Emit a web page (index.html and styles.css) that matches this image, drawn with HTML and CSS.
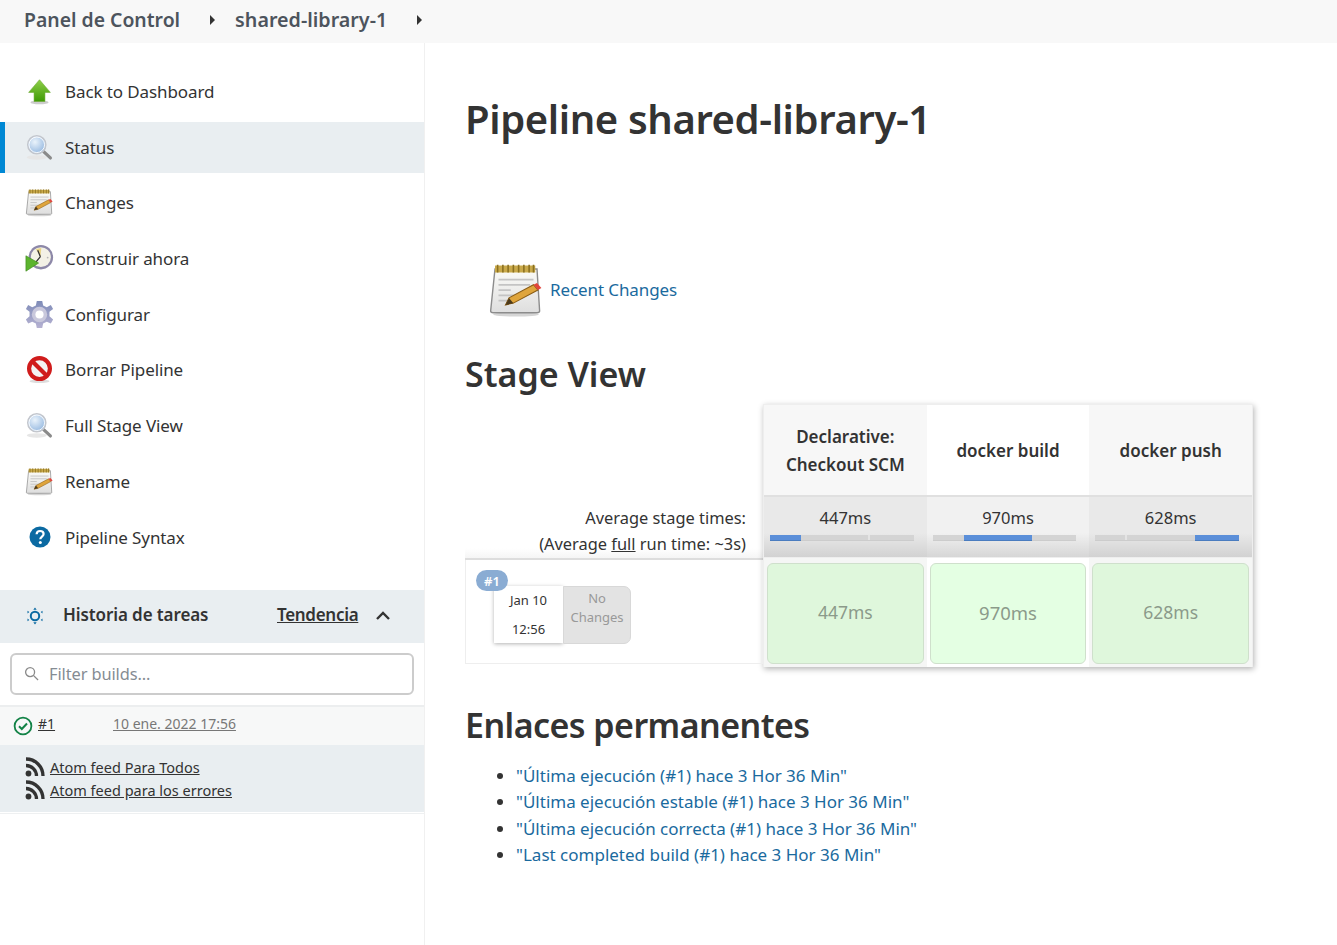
FILE: index.html
```html
<!DOCTYPE html>
<html lang="es">
<head>
<meta charset="utf-8">
<title>shared-library-1</title>
<link rel="stylesheet" href="styles.css">
</head>
<body>
<svg class="defs" width="0" height="0" aria-hidden="true">
  <defs>
    <linearGradient id="gArrow" x1="0" y1="0" x2="0" y2="1"><stop offset="0" stop-color="#8fcf4a"/><stop offset="1" stop-color="#3f9a06"/></linearGradient>
    <radialGradient id="gLens" cx=".4" cy=".35" r=".7"><stop offset="0" stop-color="#eaf3fb"/><stop offset="1" stop-color="#8fb4de"/></radialGradient>
    <linearGradient id="gGear" x1="0" y1="0" x2="0" y2="1"><stop offset="0" stop-color="#7f8cb8"/><stop offset="1" stop-color="#b6b2d2"/></linearGradient>
    <linearGradient id="gPaper" x1="0" y1="0" x2="0" y2="1"><stop offset="0" stop-color="#fbfbf8"/><stop offset="1" stop-color="#dedede"/></linearGradient>
    <symbol id="i-arrow" viewBox="0 0 32 32">
      <ellipse cx="16" cy="28" rx="10" ry="2" fill="#ccc"/>
      <path d="M16 3 L28 17 H22 V27 H10 V17 H4 Z" fill="url(#gArrow)" stroke="#6aa82c" stroke-width=".6"/>
    </symbol>
    <symbol id="i-mag" viewBox="0 0 32 32">
      <ellipse cx="13" cy="27" rx="11" ry="2.5" fill="#e6e6e6"/>
      <path d="M20 20 L28 27.500" stroke="#8a8a8a" stroke-width="3.600" stroke-linecap="round"/>
      <circle cx="13" cy="13" r="10" fill="url(#gLens)" stroke="#c3c6cc" stroke-width="1.600"/>
      <circle cx="13" cy="13" r="8.600" fill="none" stroke="#fff" stroke-width="1"/>
    </symbol>
    <symbol id="i-note" viewBox="0 0 32 32">
      <ellipse cx="16" cy="30" rx="13" ry="1.200" fill="#d5d5d5"/>
      <path d="M4 4 H28 L29.500 28 Q29.500 29 28 29 H3 Q1.500 29 1.500 28 Z" fill="url(#gPaper)" stroke="#8c8c8c" stroke-width=".8"/>
      <path d="M4 2 H27 V6 H4 Z" fill="#c9a94a"/>
      <path d="M5.500 1.500 V6 M8.500 1.500 V6 M11.500 1.500 V6 M14.500 1.500 V6 M17.500 1.500 V6 M20.500 1.500 V6 M23.500 1.500 V6 M26 1.500 V6" stroke="#8a7020" stroke-width=".9"/>
      <path d="M6 10 H26 M6 13 H24 M6 16 H13 M6 19 H17 M6 22 H11" stroke="#c4c4c4" stroke-width="1"/>
      <path d="M10 24.500 L12 20.500 L26 13 L28.500 16 L14.500 23.500 Z" fill="#dfa53c" stroke="#8a5c14" stroke-width=".6"/>
      <path d="M26 13 L28 12 L30.500 14.800 L28.500 16 Z" fill="#e2453c"/>
      <path d="M10 24.500 L12 20.500 L14.500 23.500 Z" fill="#4b3a1c"/>
    </symbol>
    <symbol id="i-build" viewBox="0 0 32 32">
      <circle cx="17.500" cy="14.500" r="13.500" fill="#8d88a8"/>
      <circle cx="17.500" cy="14.500" r="11" fill="#f3f1e6"/>
      <path d="M18 4.500 L12 5.500 L17 14 Z" fill="#e8d484"/>
      <path d="M17 14 L12 20 M17 14 L14 7" stroke="#333" stroke-width="1.400"/>
      <circle cx="25" cy="15" r="1" fill="#b5b5b5"/>
      <path d="M1 13 L15 21 L1 30 Z" fill="#5cb42e" stroke="#3e8a1c" stroke-width=".7"/>
    </symbol>
    <symbol id="i-gear" viewBox="0 0 32 32">
      <path d="M13 1 H19 L20 6 L24 8 L28.500 5.500 L31 10 L27 13 L27 18 L31 21.500 L28.500 26 L24 24 L20 26 L19 31 H13 L12 26 L8 24 L3.500 26 L1 21.500 L5 18 L5 13 L1 10 L3.500 5.500 L8 8 L12 6 Z" fill="url(#gGear)"/>
      <circle cx="16" cy="16" r="8.500" fill="#c9c8dc"/>
      <circle cx="16" cy="16" r="4.500" fill="#fff"/>
    </symbol>
    <symbol id="i-stop" viewBox="0 0 32 32">
      <ellipse cx="16" cy="29" rx="11" ry="2" fill="#ddd"/>
      <circle cx="16" cy="15" r="11.500" fill="#f4f4f4" stroke="#d01c1c" stroke-width="4.600"/>
      <path d="M8 7 L24 23" stroke="#d01c1c" stroke-width="4.600"/>
    </symbol>
    <symbol id="i-help" viewBox="0 0 24 24">
      <circle cx="12" cy="12" r="10.500" fill="#0b6aa2"/>
      <path d="M8.600 9.300 C8.700 7 10.200 6 12.100 6 C14.200 6 15.600 7.200 15.600 9 C15.600 11.600 12.300 11.700 12.300 14.300" fill="none" stroke="#fff" stroke-width="2.200"/>
      <circle cx="12.300" cy="17.500" r="1.500" fill="#fff"/>
    </symbol>
    <symbol id="i-sun" viewBox="0 0 18 18">
      <circle cx="9" cy="9" r="4.200" fill="none" stroke="#0b6aa2" stroke-width="2"/>
      <path d="M9 .5 L7.300 2.800 H10.700 Z M9 17.500 L7.300 15.200 H10.700 Z M1.500 3.800 L1.500 6.500 L3.300 5 Z M16.500 3.800 L16.500 6.500 L14.700 5 Z M1.500 14.200 L1.500 11.500 L3.300 13 Z M16.500 14.200 L16.500 11.500 L14.700 13 Z" fill="#0b6aa2"/>
    </symbol>
    <symbol id="i-rss" viewBox="0 0 20 20">
      <circle cx="3.500" cy="16.500" r="2.900" fill="#333"/>
      <path d="M1 8.500 A10.500 10.500 0 0 1 11.500 19" fill="none" stroke="#333" stroke-width="3.300"/>
      <path d="M1 2 A17 17 0 0 1 18 19" fill="none" stroke="#333" stroke-width="3.300"/>
    </symbol>
    <symbol id="i-check" viewBox="0 0 20 20">
      <circle cx="10" cy="10" r="8.400" fill="none" stroke="#138347" stroke-width="1.800"/>
      <path d="M6 10.300 L8.800 13 L14 7.500" fill="none" stroke="#138347" stroke-width="2"/>
    </symbol>
    <symbol id="i-search" viewBox="0 0 16 16">
      <circle cx="6.500" cy="6.500" r="4.800" fill="none" stroke="#8a8a8a" stroke-width="1.400"/>
      <path d="M10 10 L15 15" stroke="#8a8a8a" stroke-width="1.400"/>
    </symbol>
    <symbol id="i-chev" viewBox="0 0 16 10">
      <path d="M2 8 L8 2 L14 8" fill="none" stroke="#333" stroke-width="2.400"/>
    </symbol>
  </defs>
</svg>

<header class="topbar">
  <a class="crumb">Panel de Control</a><span class="caret"></span>
  <a class="crumb crumb-job">shared-library-1</a><span class="caret caret-job"></span>
</header>

<div class="page">
  <aside class="side">
    <nav class="tasks">
      <a class="task"><svg class="ti"><use href="#i-arrow"/></svg><span>Back to Dashboard</span></a>
      <a class="task active"><svg class="ti"><use href="#i-mag"/></svg><span>Status</span></a>
      <a class="task"><svg class="ti"><use href="#i-note"/></svg><span>Changes</span></a>
      <a class="task"><svg class="ti"><use href="#i-build"/></svg><span>Construir ahora</span></a>
      <a class="task"><svg class="ti"><use href="#i-gear"/></svg><span>Configurar</span></a>
      <a class="task"><svg class="ti"><use href="#i-stop"/></svg><span>Borrar Pipeline</span></a>
      <a class="task"><svg class="ti"><use href="#i-mag"/></svg><span>Full Stage View</span></a>
      <a class="task"><svg class="ti"><use href="#i-note"/></svg><span>Rename</span></a>
      <a class="task"><svg class="ti ti-help"><use href="#i-help"/></svg><span>Pipeline Syntax</span></a>
    </nav>

    <section class="history">
      <div class="hist-head">
        <svg class="sun"><use href="#i-sun"/></svg>
        <span class="hist-title">Historia de tareas</span>
        <a class="trend">Tendencia</a>
        <svg class="chev"><use href="#i-chev"/></svg>
      </div>
      <div class="filter-wrap">
        <div class="filter">
          <svg class="search"><use href="#i-search"/></svg>
          <span class="ph">Filter builds...</span>
        </div>
      </div>
      <div class="build-row">
        <svg class="check"><use href="#i-check"/></svg>
        <a class="bnum">#1</a>
        <a class="bdate">10 ene. 2022 17:56</a>
      </div>
      <div class="feeds">
        <div class="feed"><svg class="rss"><use href="#i-rss"/></svg><a>Atom feed Para Todos</a></div>
        <div class="feed"><svg class="rss"><use href="#i-rss"/></svg><a>Atom feed para los errores</a></div>
      </div>
    </section>
  </aside>

  <main class="main">
    <h1>Pipeline shared-library-1</h1>
    <div class="recent">
      <svg class="recent-icon"><use href="#i-note"/></svg>
      <a class="link">Recent Changes</a>
    </div>
    <h2 class="h-stage">Stage View</h2>

    <div class="stage">
      <div class="stage-left">
        <div class="avg-label">
          <div>Average stage times:</div>
          <div>(Average <u>full</u> run time: ~3s)</div>
        </div>
        <div class="run">
          <div class="badge">#1</div>
          <div class="run-date"><div>Jan 10</div><div>12:56</div></div>
          <div class="run-chg">No Changes</div>
        </div>
      </div>
      <div class="stage-grid">
        <div class="col odd">
          <div class="hd">Declarative: Checkout SCM</div>
          <div class="avg"><div>447ms</div><div class="bar"><i class="seg s1"></i><i class="tick t1"></i></div></div>
          <div class="cellwrap"><div class="cell">447ms</div></div>
        </div>
        <div class="col even">
          <div class="hd">docker build</div>
          <div class="avg"><div>970ms</div><div class="bar"><i class="seg s2"></i></div></div>
          <div class="cellwrap"><div class="cell">970ms</div></div>
        </div>
        <div class="col odd">
          <div class="hd">docker push</div>
          <div class="avg"><div>628ms</div><div class="bar"><i class="seg s3"></i><i class="tick t3"></i></div></div>
          <div class="cellwrap"><div class="cell">628ms</div></div>
        </div>
      </div>
    </div>

    <h2 class="h-perma">Enlaces permanentes</h2>
    <ul class="perma">
      <li><a class="link">"Última ejecución (#1) hace 3 Hor 36 Min"</a></li>
      <li><a class="link">"Última ejecución estable (#1) hace 3 Hor 36 Min"</a></li>
      <li><a class="link">"Última ejecución correcta (#1) hace 3 Hor 36 Min"</a></li>
      <li><a class="link">"Last completed build (#1) hace 3 Hor 36 Min"</a></li>
    </ul>
  </main>
</div>
</body>
</html>
```
FILE: styles.css
```css
* { box-sizing: border-box; }
html, body { margin: 0; padding: 0; height: 100%; }
body {
  font-family: "Noto Sans", "Open Sans", sans-serif;
  color: #333;
  background: #fff;
  height: 945px;
  overflow: hidden;
}
.defs { display: block; height: 0; }

.topbar {
  height: 43px;
  background: #f8f8f8;
  display: flex;
  align-items: center;
  padding-left: 24px;
}
.crumb {
  font-size: 19.400px;
  font-weight: 600;
  color: #4d545d;
  line-height: 1;
  padding-bottom: 4px;
}
.crumb-job { font-size: 19.700px; margin-left: 20px; }
.caret {
  width: 0; height: 0;
  border-left: 5px solid #333;
  border-top: 5px solid transparent;
  border-bottom: 5px solid transparent;
  margin: 0 0 4px 30px;
}
.caret-job { margin-left: 30px; }

.page { display: flex; height: 902px; }

.side {
  width: 425px;
  flex: none;
  border-right: 1px solid #f0f0f0;
  padding-top: 23px;
}
.tasks { display: flex; flex-direction: column; gap: 4.700px; }
.task {
  height: 51px;
  display: flex;
  align-items: center;
  padding-left: 25px;
  font-size: 17px;
  letter-spacing: -.1px;
  color: #333;
}
.task.active { background: #e9eef1; box-shadow: inset 5px 0 0 #0088d4; }
.ti { width: 29px; height: 29px; margin-right: 11px; flex: none; }
.ti-help { width: 24px; height: 24px; margin-left: 3px; margin-right: 13px; }

.history { margin-top: 27px; }
.hist-head {
  height: 53px;
  background: #e9eef1;
  display: flex;
  align-items: center;
  padding-left: 26px;
}
.sun { width: 18px; height: 18px; margin-right: 19px; flex: none; }
.hist-title { font-size: 17px; font-weight: 600; letter-spacing: -.1px; width: 214px; color: #333; margin-bottom: 4px; }
.trend { font-size: 17px; font-weight: 600; letter-spacing: -.3px; text-decoration: underline; color: #333; margin-bottom: 4px; }
.chev { width: 16px; height: 10px; margin-left: 17px; }

.filter-wrap { padding: 10px 10px 0; height: 62px; }
.filter {
  height: 42px;
  border: 2px solid #ccc;
  border-radius: 6px;
  display: flex;
  align-items: center;
  padding-left: 12px;
}
.search { width: 15px; height: 15px; margin-right: 10px; }
.ph { font-size: 16.400px; letter-spacing: -.1px; color: #858c93; }

.build-row {
  height: 40px;
  background: #f7f8f8;
  border-top: 2px solid #eceeef;
  display: flex;
  align-items: center;
  padding-left: 13px;
  font-size: 14px;
}
.check { width: 20px; height: 20px; margin-right: 5px; flex: none; }
.bnum { width: 75px; text-decoration: underline; color: #333; margin-bottom: 5px; }
.bdate { text-decoration: underline; color: #777; margin-bottom: 5px; }

.feeds {
  background: #e9eef1;
  height: 68px;
  padding: 11px 0 0 25px;
  border-bottom: 1px solid #fff;
  box-shadow: 0 1px 0 #eef0f1;
}
.feed {
  display: flex;
  align-items: center;
  height: 23px;
  font-size: 14.500px;
}
.feed a { text-decoration: underline; color: #333; }
.rss { width: 20px; height: 20px; margin-right: 5px; flex: none; }

.main { flex: 1; padding: 0 0 0 41px; min-width: 0; }
h1 {
  margin: 49px 0 0 -1px;
  font-size: 40px;
  letter-spacing: -.38px;
  line-height: 54px;
  font-weight: 600;
  color: #333;
}
.recent {
  display: flex;
  align-items: center;
  margin: 115px 0 0 22px;
  height: 58px;
}
.recent-icon { width: 56px; height: 56px; flex: none; margin-right: 6px; }
.link { color: #1a6a9e; font-size: 17px; }
.recent .link { letter-spacing: -.1px; margin-bottom: 1px; }
h2 {
  margin: 0;
  font-size: 34px;
  line-height: 46px;
  font-weight: 600;
  color: #333;
}
.h-stage { margin-top: 32px; margin-left: -1px; }

.stage { display: flex; margin-top: 7px; margin-left: -1px; width: 790px; }
.stage-left { width: 298px; flex: none; padding-top: 90px; }
.avg-label {
  height: 66px;
  text-align: right;
  padding: 11px 17px 0 0;
  font-size: 16.400px;
  line-height: 26px;
  border-bottom: 2px solid #ddd;
  color: #333;
  background: linear-gradient(#fff 85%, #f5f5f5);
}
.run {
  position: relative;
  height: 104px;
  border: 1px solid #eee;
  border-top: 0;
  display: flex;
  padding: 26px 0 0 28px;
}
.badge {
  position: absolute;
  left: 10px; top: 10px;
  width: 32px; height: 21px;
  border-radius: 11px;
  background: #8aacd3;
  color: #fff;
  font-size: 13px;
  font-weight: 600;
  display: flex;
  align-items: center;
  justify-content: center;
  z-index: 1;
}
.run-date {
  width: 69px; height: 57px;
  background: #fff;
  box-shadow: 0 1px 4px rgba(0,0,0,.3);
  font-size: 13px;
  color: #333;
  text-align: center;
  display: flex;
  flex-direction: column;
  justify-content: space-between;
  padding: 5px 0 5px;
}
.run-chg {
  width: 68px; height: 58px;
  background: #e3e3e3;
  border: 1px solid #d8d8d8;
  border-radius: 0 7px 7px 0;
  color: #999;
  font-size: 13px;
  line-height: 19px;
  text-align: center;
  padding-top: 2px;
}

.stage-grid {
  display: flex;
  width: 490px;
  height: 263px;
  border: 1px solid #eee;
  border-width: 1px 1px 0;
  box-shadow: 1px 2px 6px rgba(0,0,0,.3);
  background: #fff;
}
.col { flex: 1; display: flex; flex-direction: column; min-width: 0; }
.hd {
  height: 90px;
  display: flex;
  align-items: center;
  justify-content: center;
  text-align: center;
  font-size: 17px;
  font-weight: 600;
  line-height: 28px;
  padding: 1px 18px 0;
  color: #333;
}
.avg {
  height: 63px;
  border-top: 2px solid #e0e0e0;
  border-bottom: 1px solid #eee;
  text-align: center;
  font-size: 16.500px;
  line-height: 24px;
  padding: 9px 0 0;
  color: #333;
}
.odd .hd { background: #f7f7f7; }
.even .hd { background: #fff; }
.odd .avg { background: linear-gradient(#e9e9e9 60%, #d2d2d2); }
.even .avg { background: linear-gradient(#f1f1f1 60%, #d6d6d6); }
.bar {
  position: relative;
  height: 6px;
  margin: 5px 13px 0 6px;
  background: #d4d4d4;
  border: 1px solid #ccc;
  border-width: 0 0 1px;
}
.seg { position: absolute; top: 0; bottom: -1px; background: #5b8fd9; box-shadow: inset 0 -1px 0 #4a7cbf; }
.tick { position: absolute; top: 0; bottom: 0; width: 2px; background: #e4e4e4; }
.s1 { left: 0; width: 31px; }
.t1 { right: 44px; }
.s2 { left: 31px; width: 68px; }
.s3 { right: 0; width: 44px; }
.t3 { left: 30px; }
.cellwrap { flex: 1; padding: 5px 3px 3px 3px; }
.odd .cellwrap { background: #f5f6f5; }
.even .cellwrap { background: #fff; }
.cell {
  height: 100%;
  border: 1px solid #cfe0cc;
  border-radius: 6px;
  display: flex;
  align-items: center;
  justify-content: center;
  padding-bottom: 3px;
  font-size: 17.500px;
  color: #8b9a8a;
}
.odd .cell { background: #dff7dc; }
.even .cell { background: #e4ffe3; font-size: 18.500px; }

.h-perma { margin: 35px 0 0 -1px; letter-spacing: -.55px; }
.perma { margin: 15px 0 0; padding: 0 0 0 50px; list-style: disc; }
.perma li { height: 26.300px; font-size: 17px; line-height: 26px; }
```
